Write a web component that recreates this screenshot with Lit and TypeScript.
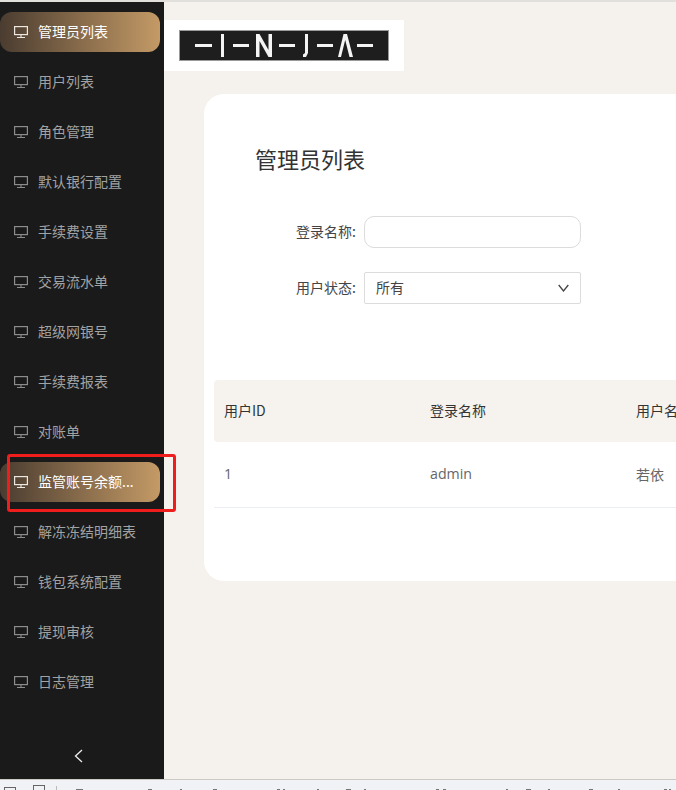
import { LitElement, html, css, svg } from "lit";
import { customElement } from "lit/decorators.js";

const items = ["管理员列表","用户列表","角色管理","默认银行配置","手续费设置","交易流水单","超级网银号","手续费报表","对账单","监管账号余额...","解冻冻结明细表","钱包系统配置","提现审核","日志管理"];
const active = new Set([0, 9]);

const marks: [number, number][] = [[76,7],[148,4],[180,2],[213,4],[277,3],[283,2],[317,2],[346,5],[364,2],[436,3],[443,3],[506,2],[526,5],[548,2],[589,4],[618,2],[664,3],[669,2]];

const monitor = html`<svg class="mon" width="14" height="14" viewBox="0 0 14 14" fill="none" stroke="currentColor"><rect x="0.6" y="1.6" width="12.800" height="8" stroke-width="1.2"/><path d="M7 9.500V12M3 12.500H11" stroke-width="1.1"/></svg>`;

@customElement("app-root")
export class AppRoot extends LitElement {
  static styles = css`
    :host { display: block; width: 676px; height: 790px; overflow: hidden; font-family: "Noto Sans CJK SC", "Open Sans", sans-serif; background: #f5f2ed; }
    .wrap { position: relative; }
    .page { display: flex; flex-direction: column; height: 790px; }
    .topline { height: 2px; background: #e2e0dd; flex: none; }
    .main { flex: 1; display: flex; min-height: 0; }
    .side { width: 164px; flex: none; background: #1a1a1a; display: flex; flex-direction: column; }
    .list { flex: 1; padding-top: 10px; display: flex; flex-direction: column; gap: 10px; }
    .item { height: 40px; width: 160px; display: flex; align-items: center; padding-left: 14px; box-sizing: border-box; gap: 10px; color: #a2a2a2; font-size: 14px; border-radius: 12px; white-space: nowrap; }
    .item span { padding-bottom: 2px; }
    .item .mon { color: #8c8c8c; }
    .item.on { color: #fff; background: linear-gradient(90deg, #4a3c30, #c49a66); }
    .item.on .mon { color: #ece7e0; }
    .mon { flex: none; }
    .collapse { height: 48px; display: flex; justify-content: center; padding: 18px 8px 0 0; box-sizing: border-box; color: #eee; }
    .collapse svg { display: block; }
    .content { flex: 1; min-width: 0; display: flex; flex-direction: column; overflow: hidden; }
    .logo { width: 240px; height: 51px; margin-top: 18px; background: #fff; display: flex; align-items: center; padding-left: 15px; box-sizing: border-box; flex: none; }
    .logo svg { display: block; }
    .card { margin: 23px 0 0 40px; width: 600px; height: 487px; flex: none; background: #fff; border-radius: 20px 0 0 20px; box-sizing: border-box; padding-top: 46px; }
    h1 { margin: 0 0 0 51px; font-weight: 400; font-size: 22px; line-height: 36px; color: #333; }
    .form { margin-top: 40px; display: flex; flex-direction: column; gap: 24px; }
    .row { display: flex; align-items: center; height: 32px; }
    .lbl { width: 160px; text-align: right; font-size: 14px; color: #444; flex: none; box-sizing: border-box; padding: 0 8px 3px 0; }
    .input, .select { width: 217px; height: 32px; box-sizing: border-box; border: 1px solid #dcdcdc; background: #fff; }
    .input { border-radius: 10px; }
    .select { border-radius: 2px; display: flex; align-items: center; justify-content: space-between; padding: 0 11px 0 11px; font-size: 14px; color: #444; }
    .select span { padding-bottom: 2px; }
    .table { margin: 76px 0 0 10px; font-size: 14px; }
    .tr { display: grid; grid-template-columns: 206px 206px 1fr; padding-left: 10px; align-items: center; }
    .tr span { padding-bottom: 2px; white-space: nowrap; }
    .head { height: 62px; background: #f6f3ee; border-radius: 4px 0 0 4px; color: #333; }
    .body { height: 65px; color: #666; border-bottom: 1px solid #ebeef5; font-family: "Open Sans", "Noto Sans CJK SC", sans-serif; font-size: 14.2px; }
    .body .cjk { font-family: "Noto Sans CJK SC", sans-serif; font-size: 14px; }
    .bottom { height: 11px; flex: none; background: #f1f2f5; border-top: 1px solid #ccc9c7; box-sizing: border-box; position: relative; overflow: hidden; }
    .box { position: absolute; width: 12px; height: 12px; border: 1px solid #666; box-sizing: border-box; }
    .box.a { left: 4px; top: 7px; }
    .box.b { left: 33px; top: 5px; }
    .sep { position: absolute; left: 56px; top: 6px; width: 1px; height: 6px; background: #bbb; }
    .frags { position: absolute; left: 0; top: 9px; display: block; }
    .mark { position: absolute; left: 7px; top: 454px; width: 169px; height: 58px; border: 3px solid #f01d1d; border-radius: 3px; box-sizing: border-box; }
  `;

  render() {
    return html`
      <div class="wrap">
      <div class="page">
        <div class="topline"></div>
        <div class="main">
          <nav class="side">
            <div class="list">
              ${items.map((t, i) => html`<div class="item ${active.has(i) ? "on" : ""}">${monitor}<span>${t}</span></div>`)}
            </div>
            <div class="collapse">
              <svg width="9" height="14" viewBox="0 0 9 14" fill="none" stroke="currentColor" stroke-width="1.3"><path d="M8 1L1.500 7L8 13"/></svg>
            </div>
          </nav>
          <section class="content">
            <div class="logo">
              <svg width="210" height="31" viewBox="0 0 210 31">
                <rect x="0.5" y="0.5" width="209" height="30" fill="#1e1e1e" stroke="#9a9a9a"/>
                <g fill="#f4f4f4">
                  <rect x="16" y="14" width="17" height="3"/>
                  <rect x="42" y="4" width="3" height="23"/>
                  <rect x="54" y="14" width="16" height="3"/>
                  <path d="M77 4h3.500l9 16V4H93v23h-3.500l-9-16v16H77z"/>
                  <rect x="100" y="14" width="16" height="3"/>
                  <path d="M126 4h3v19l-2 4h-3v-2.500l2-1.500z"/>
                  <rect x="138" y="14" width="16" height="3"/>
                  <path d="M164.500 4h3.500l6 23h-3.500l-4.300-17-4.200 17H159z"/>
                  <rect x="178" y="14" width="16" height="3"/>
                </g>
              </svg>
            </div>
            <div class="card">
              <h1>管理员列表</h1>
              <div class="form">
                <div class="row"><div class="lbl">登录名称:</div><div class="input"></div></div>
                <div class="row"><div class="lbl">用户状态:</div><div class="select"><span>所有</span>
                  <svg width="11" height="8" viewBox="0 0 11 8" fill="none" stroke="#444" stroke-width="1.3"><path d="M0.7 1L5.500 7L10.300 1"/></svg></div></div>
              </div>
              <div class="table">
                <div class="tr head"><span>用户ID</span><span>登录名称</span><span>用户名称</span></div>
                <div class="tr body"><span>1</span><span>admin</span><span class="cjk">若依</span></div>
              </div>
            </div>
          </section>
        </div>
        <div class="bottom">
          <div class="box a"></div><div class="box b"></div><div class="sep"></div>
          <svg class="frags" width="676" height="1" viewBox="0 0 676 1">
            ${marks.map(([x, w]) => svg`<rect x=${x} y="0" width=${w} height="1" fill="#777"></rect>`)}
          </svg>
        </div>
      </div>
      <div class="mark"></div>
      </div>`;
  }
}
